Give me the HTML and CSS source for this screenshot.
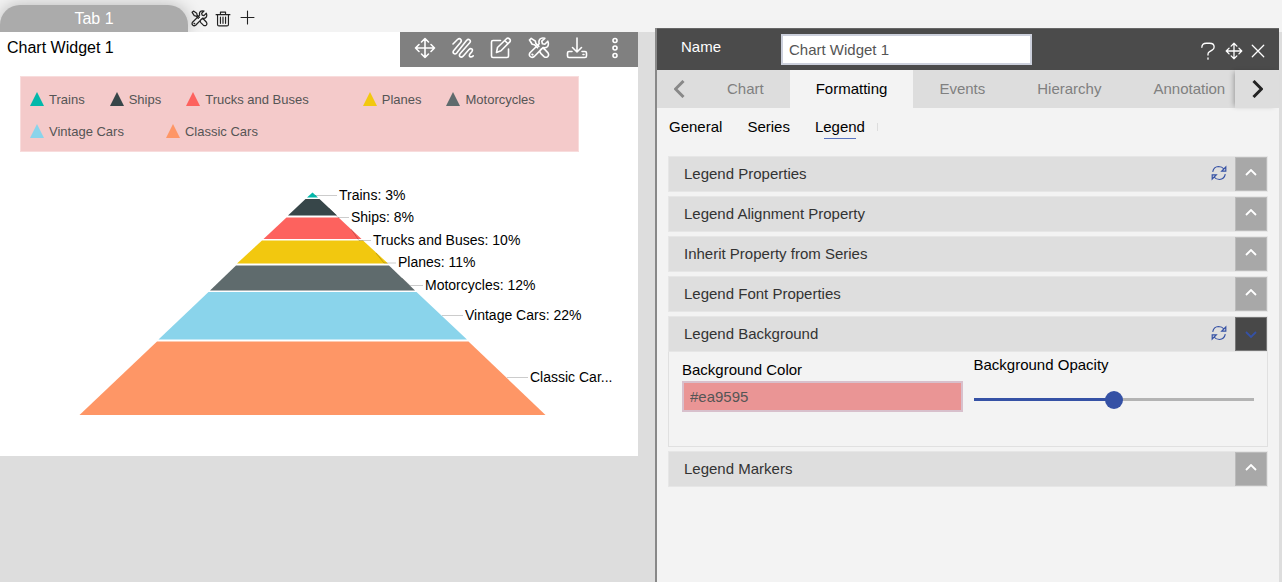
FILE: index.html
```
<!DOCTYPE html>
<html lang="en">
<head>
<meta charset="utf-8">
<title>Chart Widget 1</title>
<link rel="stylesheet" href="styles.css">
</head>
<body>
<svg class="defs" aria-hidden="true">
  <symbol id="move" viewBox="0 0 22 22"><path d="M11 1.500v19M1.500 11h19M7.500 5 11 1.500 14.500 5M7.500 17l3.500 3.500 3.500-3.500M5 7.500 1.500 11 5 14.500M17 7.500l3.500 3.500-3.500 3.500"/></symbol>
  <symbol id="scribble" viewBox="0 0 22 22"><path d="M1 7 5.500 2.500C8 .5 10.500 3 8.500 5.500L1.800 13.500c-1.800 2.300.7 4.700 2.900 2.600L14.500 3.500c2.300-2.400 5-.1 3.200 2.300L8.200 16.500c-2 2.500.6 4.900 2.900 2.700L17 12.500c2-2 4.300-.1 3 1.900l-2.300 2.900c-1.200 2.200 1 3.700 3.500 1.500"/></symbol>
  <symbol id="edit" viewBox="0 0 22 22"><path d="M10.500 3.500H3a1.500 1.500 0 0 0-1.500 1.500v14A1.500 1.500 0 0 0 3 20.500h14a1.500 1.500 0 0 0 1.500-1.500v-7M7.500 10.500 16.500 1.700q1.500-1.200 3 .2t.3 3L11 13.800l-4.500 1.700ZM14.700 3.500l3.300 3.300"/></symbol>
  <symbol id="tools" viewBox="0 0 22 22"><path d="m1.500 3 1.700-1.600 4.200 2.800.4 2.200 3 3M1.500 3l2.700 4.300 2.300.5 3 3M12 13.500l1.500-1.700q2-.8 3.500.8l3 3.300q1.300 2.200-.3 3.700-1.800 1.400-3.700 0l-3-3q-1.500-1.600-1-3.100M19.800 4.200l-3 3-2.400-.5-.6-2.500 3-2.900q-3.300-.9-5 1-1.400 1.700-.6 4.400L2 15.800q-1.400 2.100.2 3.700t3.800.3L15 10.600q3 .7 4.600-1.200 1.500-2 .2-5.200ZM4 17.300l.8.500"/></symbol>
  <symbol id="download" viewBox="0 0 22 22"><path d="M11 1v14M6.500 10.500 11 15l4.500-4.500M6 14.500H3A1.500 1.500 0 0 0 1.500 16v3A1.500 1.500 0 0 0 3 20.500h16a1.500 1.500 0 0 0 1.500-1.500v-3a1.500 1.500 0 0 0-1.500-1.500h-3M17 17.500h1"/></symbol>
  <symbol id="dots" viewBox="0 0 22 22"><circle cx="11" cy="3.500" r="2"/><circle cx="11" cy="11" r="2"/><circle cx="11" cy="18.500" r="2"/></symbol>
  <symbol id="trash" viewBox="0 0 22 22"><path d="M1.500 5h19M7.500 5V1.500h7V5M3.500 5v13.500a2 2 0 0 0 2 2h11a2 2 0 0 0 2-2V5M7.500 8.500v8.500M11 8.500v8.500M14.500 8.500v8.500"/></symbol>
  <symbol id="plus" viewBox="0 0 22 22"><path d="M11 1.500v19M1.500 11h19"/></symbol>
  <symbol id="help" viewBox="0 0 22 22"><path d="M3.500 6.500Q3.500 1.500 9 1.500h4Q18.500 1.500 18.500 6q0 2.500-2.500 4l-3 1.800q-2 1.200-2 3V16M11 19.500v1.500"/></symbol>
  <symbol id="close" viewBox="0 0 22 22"><path d="m2 2 18 18M20 2 2 20"/></symbol>
  <symbol id="up" viewBox="0 0 12 7"><path d="m1 6 5-5 5 5"/></symbol>
  <symbol id="down" viewBox="0 0 12 7"><path d="m1 1 5 5 5-5"/></symbol>
  <symbol id="left" viewBox="0 0 11 18"><path d="M9.500 1 1.500 9l8 8"/></symbol>
  <symbol id="right" viewBox="0 0 11 18"><path d="m1.500 1 8 8-8 8"/></symbol>
  <symbol id="refresh" viewBox="0 0 16 16"><path d="M1.700 6.800Q2.800 1.700 7.500 1.500q3.500 0 5.500 2.500M14.800 2v4.200h-4.100ZM14.300 9.200Q13.200 14.300 8.500 14.500q-3.500 0-5.500-2.500M1.200 14V9.800h4.100Z"/></symbol>
  <symbol id="marker" viewBox="0 0 14 14"><path d="M7 0 14 14H0Z"/></symbol>
</svg>

<header class="tabbar">
  <button class="page-tab">Tab 1</button>
  <button class="tab-action" aria-label="Tab settings"><svg class="icon dark"><use href="#tools"/></svg></button>
  <button class="tab-action" aria-label="Delete tab"><svg class="icon dark trash"><use href="#trash"/></svg></button>
  <button class="tab-action add" aria-label="Add tab"><svg class="icon dark plus"><use href="#plus"/></svg></button>
</header>

<main class="layout">
  <section class="workspace">
    <article class="widget">
      <header class="widget-head">
        <h1 class="widget-title">Chart Widget 1</h1>
        <div class="toolbar">
          <button aria-label="Move"><svg class="icon"><use href="#move"/></svg></button>
          <button aria-label="Draw"><svg class="icon"><use href="#scribble"/></svg></button>
          <button aria-label="Edit"><svg class="icon"><use href="#edit"/></svg></button>
          <button aria-label="Properties"><svg class="icon"><use href="#tools"/></svg></button>
          <button aria-label="Download"><svg class="icon"><use href="#download"/></svg></button>
          <button aria-label="More"><svg class="icon"><use href="#dots"/></svg></button>
        </div>
      </header>
      <div class="legend">
        <ul>
          <li><svg class="trains"><use href="#marker"/></svg>Trains</li>
          <li><svg class="ships"><use href="#marker"/></svg>Ships</li>
          <li class="wide"><svg class="trucks"><use href="#marker"/></svg>Trucks and Buses</li>
          <li><svg class="planes"><use href="#marker"/></svg>Planes</li>
          <li><svg class="motorcycles"><use href="#marker"/></svg>Motorcycles</li>
        </ul>
        <ul>
          <li class="medium"><svg class="vintage"><use href="#marker"/></svg>Vintage Cars</li>
          <li><svg class="classic"><use href="#marker"/></svg>Classic Cars</li>
        </ul>
      </div>
      <svg class="pyramid" viewBox="0 0 638 304" role="img" aria-label="Pyramid chart">
        <path class="trains" d="M312.500 40.500 318 45.500H307Z"/>
        <path class="ships" d="M305.500 47H319.500L337 63.500H288Z"/>
        <path class="trucks" d="M286.500 65.500H338.500L361.500 87H263.500Z"/>
        <path class="planes" d="M262 88.500H363L388 111.500H237Z"/>
        <path class="motorcycles" d="M236 113.500H389L415 138.500H210Z"/>
        <path class="vintage" d="M208.500 140H416.500L467 187.500H158.500Z"/>
        <path class="classic" d="M157 189.500H468.500L545.500 263H79.500Z"/>
        <path class="link" d="M315 43.500h22M329 56l9 9.500h11M351 77l8 11.500h12M376 101l8 10h12M402 126l8 7.500h13M442 163.500h21M507 225.500h21"/>
        <g class="labels">
          <text x="339" y="48">Trains: 3%</text>
          <text x="351" y="70">Ships: 8%</text>
          <text x="373" y="93">Trucks and Buses: 10%</text>
          <text x="398" y="115">Planes: 11%</text>
          <text x="425" y="138">Motorcycles: 12%</text>
          <text x="465" y="168">Vintage Cars: 22%</text>
          <text x="530" y="230">Classic Car...</text>
        </g>
      </svg>
    </article>
  </section>

  <aside class="panel">
    <header class="panel-head">
      <label for="name">Name</label>
      <input id="name" type="text" value="Chart Widget 1">
      <div class="panel-actions">
        <button aria-label="Help"><svg class="icon help"><use href="#help"/></svg></button>
        <button aria-label="Move panel"><svg class="icon"><use href="#move"/></svg></button>
        <button aria-label="Close"><svg class="icon close"><use href="#close"/></svg></button>
      </div>
    </header>
    <nav class="tabs">
      <button class="scroll prev" aria-label="Previous tabs"><svg><use href="#left"/></svg></button>
      <div class="tab-list">
        <button>Chart</button>
        <button class="active">Formatting</button>
        <button>Events</button>
        <button>Hierarchy</button>
        <button>Annotation</button>
      </div>
      <button class="scroll next" aria-label="Next tabs"><svg><use href="#right"/></svg></button>
    </nav>
    <nav class="subtabs">
      <button>General</button>
      <button>Series</button>
      <button class="active">Legend</button>
    </nav>
    <div class="accordion">
      <section><header class="bar"><h2>Legend Properties</h2><button class="refresh" aria-label="Reset"><svg><use href="#refresh"/></svg></button><button class="toggle" aria-label="Expand"><svg><use href="#up"/></svg></button></header></section>
      <section><header class="bar"><h2>Legend Alignment Property</h2><button class="toggle" aria-label="Expand"><svg><use href="#up"/></svg></button></header></section>
      <section><header class="bar"><h2>Inherit Property from Series</h2><button class="toggle" aria-label="Expand"><svg><use href="#up"/></svg></button></header></section>
      <section><header class="bar"><h2>Legend Font Properties</h2><button class="toggle" aria-label="Expand"><svg><use href="#up"/></svg></button></header></section>
      <section>
        <header class="bar"><h2>Legend Background</h2><button class="refresh" aria-label="Reset"><svg><use href="#refresh"/></svg></button><button class="toggle open" aria-label="Collapse"><svg><use href="#down"/></svg></button></header>
        <div class="fields">
          <div class="field color">
            <label for="bg">Background Color</label>
            <input id="bg" type="text" value="#ea9595">
          </div>
          <div class="field">
            <label for="opacity">Background Opacity</label>
            <input id="opacity" type="range" min="0" max="100" value="50">
          </div>
        </div>
      </section>
      <section><header class="bar"><h2>Legend Markers</h2><button class="toggle" aria-label="Expand"><svg><use href="#up"/></svg></button></header></section>
    </div>
  </aside>
</main>
</body>
</html>
```
FILE: styles.css
```
* { box-sizing: border-box; }
body {
  margin: 0;
  min-height: 100vh;
  display: flex;
  flex-direction: column;
  background: #ddd;
  font: 15px/20px "Liberation Sans", Arial, sans-serif;
  color: #000;
}
h1, h2, ul { margin: 0; padding: 0; font-weight: normal; list-style: none; }
button { border: 0; padding: 0; background: none; font: inherit; color: inherit; }
input { font: inherit; margin: 0; }
svg { display: block; }
.defs { position: absolute; width: 0; height: 0; }
.icon { width: 22px; height: 22px; fill: none; stroke: #fff; stroke-width: 1.6; stroke-linecap: round; stroke-linejoin: round; }

.tabbar { display: flex; align-items: flex-end; height: 32px; background: #f3f3f3; overflow: hidden; }
.page-tab {
  width: 188px;
  height: 27px;
  border-radius: 20px 20px 0 0;
  background: #ababab;
  box-shadow: 0 0 16px rgba(0, 0, 0, .25);
  color: #fff;
  font-size: 16px;
}
.tab-action { width: 23px; height: 27px; display: grid; place-items: center; }
.tab-action.add { width: 26px; padding-bottom: 2px; }
.icon.dark { width: 17px; height: 17px; stroke: #222; }
.icon.trash { width: 16px; height: 16px; }
.icon.plus { width: 15px; height: 15px; }

.layout { flex: 1; display: grid; grid-template-columns: 655fr 624fr; padding-right: 3px; }
.workspace { min-width: 0; padding-right: 17px; }
.widget { background: #fff; }
.widget-head { display: flex; justify-content: space-between; height: 35px; }
.widget-title { font-size: 16px; line-height: 32px; padding-left: 7px; }
.toolbar { display: flex; gap: 16px; align-items: center; padding: 0 12px 4px 14px; background: #808080; }

.legend {
  margin: 9px 59px 0 20px;
  padding: 7px 9px 3px;
  background: #f4caca;
  border: 1px solid #f8dcdc;
  font-size: 13px;
  color: #555;
}
.legend ul { display: flex; }
.legend li { display: flex; align-items: center; gap: 5px; height: 32px; padding-right: 25px; white-space: nowrap; }
.legend li.medium { padding-right: 42px; }
.legend li.wide { padding-right: 54px; }
.legend svg { width: 14px; height: 14px; margin-bottom: 3px; }
.trains { fill: #03b8aa; }
.ships { fill: #374649; }
.trucks { fill: #fd625e; }
.planes { fill: #f2c80f; }
.motorcycles { fill: #5f6b6d; }
.vintage { fill: #8ad4eb; }
.classic { fill: #fe9666; }
.pyramid { width: 100%; }
.link { fill: none; stroke: #000; stroke-opacity: .2; }
.labels { font-size: 14px; }

.panel {
  min-width: 0;
  margin-top: -4px;
  background: #f3f3f3;
  border-left: 2px solid #888;
}
.panel-head { display: flex; align-items: center; height: 42px; padding: 0 14px 0 24px; background: #4b4b4b; border-top: 1px solid #666; color: #fff; }
.panel-head label { width: 100px; padding-bottom: 6px; }
.panel-head input { width: 251px; height: 31px; padding: 0 6px; border: 2px solid #ccd0dc; background: #fff; color: #555; }
.panel-actions { display: flex; align-items: center; gap: 8px; margin-left: auto; padding-top: 2px; }
.panel-actions .icon { width: 18px; height: 18px; }
.panel-actions .close { width: 14px; height: 14px; stroke-width: 2; }

.tabs { display: flex; height: 38px; background: #ddd; }
.tab-list { flex: 1; min-width: 0; display: flex; overflow: hidden; }
.tab-list button { flex: none; padding: 0 26px; color: #808080; }
.tab-list button:last-child { padding-right: 0; }
.tab-list .active { background: #f3f3f3; color: #000; }
.scroll { flex: none; width: 44px; display: grid; place-items: center; }
.scroll svg { width: 11px; height: 18px; fill: none; stroke: #888; stroke-width: 3; }
.scroll.next { box-shadow: -3px 0 5px -2px rgba(0, 0, 0, .3); }
.scroll.next svg { stroke: #222; }

.subtabs { display: flex; gap: 25px; padding: 8px 12px 0; height: 48px; }
.subtabs button { height: 23px; padding-bottom: 1px; }
.subtabs .active { background: linear-gradient(#5873c0, #5873c0) center bottom / 32px 1px no-repeat; }
.subtabs::after { content: ""; width: 1px; height: 8px; margin: 7px 0 0 -13px; background: #ddd; }

.accordion { display: grid; gap: 4px; padding: 0 11px; }
.bar { display: flex; align-items: stretch; height: 36px; background: #dedede; border: 1px solid #e6e6e6; }
.bar h2 { flex: 1; padding-left: 15px; font-size: 15px; line-height: 34px; color: #333; }
.refresh { width: 33px; display: grid; place-items: center; padding-bottom: 2px; }
.refresh svg { width: 16px; height: 16px; fill: none; stroke: #3551a5; stroke-width: 1.2; }
.toggle { width: 32px; display: grid; place-items: center; padding-bottom: 3px; background: #a8a8a8; border: 1px solid #bbb; }
.toggle svg { width: 12px; height: 7px; fill: none; stroke: #fff; stroke-width: 1.8; }
.toggle.open { background: #484848; border-color: #777; padding-bottom: 0; }
.toggle.open svg { stroke: #3551a5; }

.fields { display: grid; grid-template-columns: 1fr 1fr; gap: 11px; height: 95px; padding: 3px 13px; border: 1px solid #e0e0e0; border-top: 0; }
.field { display: flex; flex-direction: column; }
.field.color { padding-top: 5px; }
.field.color label { padding-bottom: 1px; }
.field.color input { height: 31px; padding: 0 6px; border: 2px solid #d8c0cc; background: #ea9595; color: #555; }
input[type="range"] { appearance: none; width: 100%; height: 19px; margin-top: 15px; background: linear-gradient(90deg, #3551a5 50%, #b3b3b3 50%) center / 100% 3px no-repeat; }
input[type="range"]::-webkit-slider-thumb { appearance: none; width: 18px; height: 18px; border-radius: 50%; background: #3551a5; }
```
